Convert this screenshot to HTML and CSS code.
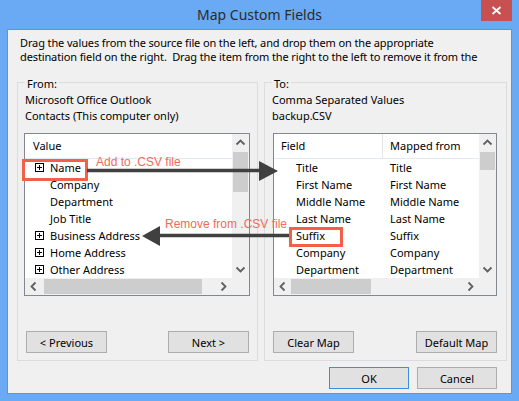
FILE: index.html
```html
<!DOCTYPE html>
<html>
<head>
<meta charset="utf-8">
<link rel="stylesheet" href="styles.css">
</head>
<body>
<div class="window">
  <div class="titlebar">
    <span></span>
    <div class="title">Map Custom Fields</div>
    <div class="close"><svg width="11" height="9" viewBox="0 0 11 9"><path d="M1.5 1 L9.5 8 M9.5 1 L1.5 8" stroke="#fff" stroke-width="1.8" fill="none"/></svg></div>
  </div>
  <div class="client">
    <div class="desc">
      <div class="desc-line">Drag the values from the source file on the left, and drop them on the appropriate</div>
      <div class="desc-line">destination field on the right.&nbsp; Drag the item from the right to the left to remove it from the</div>
    </div>
    <div class="groups">
      <div class="group group-from">
        <span class="legend">From:</span>
        <div class="src">Microsoft Office Outlook</div>
        <div class="src">Contacts (This computer only)</div>
        <div class="list">
          <div class="list-main">
            <div class="list-head"><span class="head-value">Value</span></div>
            <div class="rows">
              <div class="row"><svg class="plus" width="9" height="9" viewBox="0 0 9 9"><rect x="0.5" y="0.5" width="8" height="8" fill="#fff" stroke="#000"/><path d="M2 4.5H7M4.5 2V7" stroke="#000"/></svg>Name</div>
              <div class="row leaf">Company</div>
              <div class="row leaf">Department</div>
              <div class="row leaf">Job Title</div>
              <div class="row"><svg class="plus" width="9" height="9" viewBox="0 0 9 9"><rect x="0.5" y="0.5" width="8" height="8" fill="#fff" stroke="#000"/><path d="M2 4.5H7M4.5 2V7" stroke="#000"/></svg>Business Address</div>
              <div class="row"><svg class="plus" width="9" height="9" viewBox="0 0 9 9"><rect x="0.5" y="0.5" width="8" height="8" fill="#fff" stroke="#000"/><path d="M2 4.5H7M4.5 2V7" stroke="#000"/></svg>Home Address</div>
              <div class="row"><svg class="plus" width="9" height="9" viewBox="0 0 9 9"><rect x="0.5" y="0.5" width="8" height="8" fill="#fff" stroke="#000"/><path d="M2 4.5H7M4.5 2V7" stroke="#000"/></svg>Other Address</div>
            </div>
          </div>
          <div class="vscroll">
            <div class="sb-btn"><svg width="17" height="17" viewBox="0 0 17 17"><polyline points="4.5,10.5 8.5,6.5 12.5,10.5" fill="none" stroke="#606060" stroke-width="1.8"/></svg></div>
            <div class="vthumb thumb-left"></div>
            <div class="sb-fill"></div>
            <div class="sb-btn"><svg width="17" height="17" viewBox="0 0 17 17"><polyline points="4.5,6.5 8.5,10.5 12.5,6.5" fill="none" stroke="#606060" stroke-width="1.8"/></svg></div>
          </div>
          <div class="hscroll">
            <div class="sb-btn"><svg width="17" height="17" viewBox="0 0 17 17"><polyline points="10.5,4.5 6.5,8.5 10.5,12.5" fill="none" stroke="#606060" stroke-width="1.8"/></svg></div>
            <div class="hthumb hthumb-left"></div>
            <div class="sb-fill"></div>
            <div class="sb-btn"><svg width="17" height="17" viewBox="0 0 17 17"><polyline points="6.5,4.5 10.5,8.5 6.5,12.5" fill="none" stroke="#606060" stroke-width="1.8"/></svg></div>
          </div>
          <div class="corner"></div>
        </div>
        <div class="btnrow btnrow-from">
          <button class="btn">&lt; Previous</button>
          <button class="btn">Next &gt;</button>
        </div>
      </div>
      <div class="group group-to">
        <span class="legend">To:</span>
        <div class="src">Comma Separated Values</div>
        <div class="src">backup.CSV</div>
        <div class="list">
          <div class="list-main">
            <div class="list-head"><span class="head-field">Field</span><span class="head-mapped">Mapped from</span></div>
            <div class="rows">
              <div class="mrow"><span class="fcol">Title</span><span class="mcol">Title</span></div>
              <div class="mrow"><span class="fcol">First Name</span><span class="mcol">First Name</span></div>
              <div class="mrow"><span class="fcol">Middle Name</span><span class="mcol">Middle Name</span></div>
              <div class="mrow"><span class="fcol">Last Name</span><span class="mcol">Last Name</span></div>
              <div class="mrow"><span class="fcol">Suffix</span><span class="mcol">Suffix</span></div>
              <div class="mrow"><span class="fcol">Company</span><span class="mcol">Company</span></div>
              <div class="mrow"><span class="fcol">Department</span><span class="mcol">Department</span></div>
            </div>
          </div>
          <div class="vscroll">
            <div class="sb-btn"><svg width="17" height="17" viewBox="0 0 17 17"><polyline points="4.5,10.5 8.5,6.5 12.5,10.5" fill="none" stroke="#606060" stroke-width="1.8"/></svg></div>
            <div class="vthumb thumb-right"></div>
            <div class="sb-fill"></div>
            <div class="sb-btn"><svg width="17" height="17" viewBox="0 0 17 17"><polyline points="4.5,6.5 8.5,10.5 12.5,6.5" fill="none" stroke="#606060" stroke-width="1.8"/></svg></div>
          </div>
          <div class="hscroll">
            <div class="sb-btn"><svg width="17" height="17" viewBox="0 0 17 17"><polyline points="10.5,4.5 6.5,8.5 10.5,12.5" fill="none" stroke="#606060" stroke-width="1.8"/></svg></div>
            <div class="hthumb hthumb-right"></div>
            <div class="sb-fill"></div>
            <div class="sb-btn"><svg width="17" height="17" viewBox="0 0 17 17"><polyline points="6.5,4.5 10.5,8.5 6.5,12.5" fill="none" stroke="#606060" stroke-width="1.8"/></svg></div>
          </div>
          <div class="corner"></div>
        </div>
        <div class="btnrow">
          <button class="btn">Clear Map</button>
          <button class="btn">Default Map</button>
        </div>
      </div>
    </div>
    <div class="footer">
      <button class="btn btn-ok">OK</button>
      <button class="btn">Cancel</button>
    </div>
  </div>

  <div class="mark mark-name"></div>
  <div class="mark mark-suffix"></div>
  <svg class="arrows" width="519" height="401" viewBox="0 0 519 401">
    <line x1="87" y1="170.5" x2="261" y2="170.5" stroke="#404040" stroke-width="3.5"/>
    <polygon points="259,161 278,171 259,181" fill="#404040"/>
    <line x1="289" y1="235.5" x2="158" y2="235.5" stroke="#404040" stroke-width="3.5"/>
    <polygon points="160,226 142,236 160,246" fill="#404040"/>
  </svg>
  <span class="note note-add">Add to .CSV file</span>
  <span class="note note-remove">Remove from .CSV file</span>
</div>
</body>
</html>
```
FILE: styles.css
```css
html, body {
  margin: 0;
  padding: 0;
}
body {
  width: 519px;
  height: 401px;
  overflow: hidden;
  font-family: "Noto Sans", "Open Sans", sans-serif;
  font-size: 11px;
  color: #000;
}
.window {
  position: relative;
  width: 519px;
  height: 401px;
  box-sizing: border-box;
  background: #6aaaf5;
  padding: 0 7px 7px 7px;
  display: flex;
  flex-direction: column;
}
.titlebar {
  height: 29px;
  flex: none;
  display: grid;
  grid-template-columns: 1fr auto 1fr;
}
.title {
  font-size: 14px;
  line-height: 30px;
  color: #2b2b2b;
}
.close {
  justify-self: end;
  width: 31px;
  height: 21px;
  background: #c75050;
  display: flex;
  align-items: center;
  justify-content: center;
}
.client {
  height: 365px;
  flex: none;
  box-sizing: border-box;
  border: 1px solid #5a96dc;
  background: #f0f0f0;
  padding: 6px 4px 4px 9px;
  display: flex;
  flex-direction: column;
}
.desc {
  margin: 0 0 18px 3px;
  height: 28px;
  flex: none;
}
.desc-line {
  height: 14px;
  line-height: 14px;
  white-space: nowrap;
  letter-spacing: -0.12px;
}
.groups {
  display: flex;
  gap: 6px;
  height: 279px;
  flex: none;
}
.group {
  box-sizing: border-box;
  height: 279px;
  border: 1px solid #dcdcdc;
  display: flex;
  flex-direction: column;
}
.group-from {
  width: 241px;
  padding: 0 7px 7px 6px;
}
.group-to {
  width: 243px;
  padding: 0 9px 7px 8px;
}
.legend {
  align-self: flex-start;
  margin-top: -7px;
  line-height: 16px;
  background: #f0f0f0;
  padding: 0 2px;
  margin-left: 1px;
}
.group-to .legend {
  margin-left: -1px;
}
.src {
  line-height: 16px;
  padding-left: 1px;
  white-space: nowrap;
}
.group-to .src {
  padding-left: 0;
  margin-left: -1px;
}
.list {
  margin-top: 9px;
  height: 163px;
  box-sizing: border-box;
  border: 1px solid #828790;
  background: #fff;
  display: grid;
  grid-template-columns: 1fr 17px;
  grid-template-rows: 1fr 17px;
  overflow: hidden;
}
.list-main {
  overflow: hidden;
  display: flex;
  flex-direction: column;
  min-width: 0;
}
.list-head {
  flex: none;
  height: 24px;
  line-height: 24px;
  border-bottom: 1px solid #e3e9f3;
  display: flex;
}
.head-value {
  padding-left: 8px;
}
.head-field {
  width: 109px;
  box-sizing: border-box;
  padding-left: 7px;
  border-right: 1px solid #e5e5e5;
}
.head-mapped {
  padding-left: 7px;
}
.rows {
  flex: 1;
  overflow: hidden;
}
.row {
  height: 17px;
  line-height: 17px;
  padding-left: 10px;
  display: flex;
  align-items: center;
  white-space: nowrap;
}
.row.leaf {
  padding-left: 25px;
}
.plus {
  flex: none;
  margin-right: 6px;
}
.mrow {
  height: 17px;
  line-height: 17px;
  display: grid;
  grid-template-columns: 109px 1fr;
  white-space: nowrap;
}
.fcol {
  padding-left: 22px;
}
.mcol {
  padding-left: 7px;
}
.vscroll {
  background: #f0f0f0;
  display: flex;
  flex-direction: column;
}
.hscroll {
  background: #f0f0f0;
  display: flex;
}
.sb-btn {
  width: 17px;
  height: 17px;
  flex: none;
}
.sb-btn svg {
  display: block;
}
.sb-fill {
  flex: 1;
}
.vthumb {
  flex: none;
  margin: 1px 1px 0 1px;
  background: #cdcdcd;
}
.thumb-left {
  height: 40px;
}
.thumb-right {
  height: 18px;
}
.hthumb {
  flex: none;
  margin-top: 1px;
  height: 15px;
  background: #cdcdcd;
}
.hthumb-left {
  margin-left: 2px;
  width: 158px;
}
.hthumb-right {
  margin-left: 0;
  width: 80px;
}
.corner {
  background: #f0f0f0;
}
.btnrow {
  margin-top: 35px;
  display: flex;
  justify-content: space-between;
}
.btnrow-from {
  padding: 0 1px 0 2px;
}
.btn {
  width: 81px;
  height: 22px;
  box-sizing: border-box;
  border: 1px solid #adadad;
  background: #e1e1e1;
  font-family: "Noto Sans", "Open Sans", sans-serif;
  font-size: 11px;
  color: #000;
  padding: 0;
  margin: 0;
}
.footer {
  margin-top: 6px;
  padding-right: 10px;
  display: flex;
  justify-content: flex-end;
  gap: 8px;
}
.footer .btn {
  width: 80px;
}
.btn-ok {
  border-color: #3d8ee0;
}
.mark {
  position: absolute;
  box-sizing: border-box;
  border: 3px solid #f2604c;
}
.mark-name {
  left: 22px;
  top: 159px;
  width: 66px;
  height: 22px;
}
.mark-suffix {
  left: 289px;
  top: 227px;
  width: 54px;
  height: 20px;
}
.arrows {
  position: absolute;
  left: 0;
  top: 0;
  pointer-events: none;
}
.note {
  position: absolute;
  font-family: "Liberation Sans", Arial, sans-serif;
  font-size: 12px;
  line-height: 14px;
  color: #f36a5c;
  white-space: nowrap;
}
.note-add {
  left: 96px;
  top: 155px;
}
.note-remove {
  left: 165px;
  top: 217px;
}
```
